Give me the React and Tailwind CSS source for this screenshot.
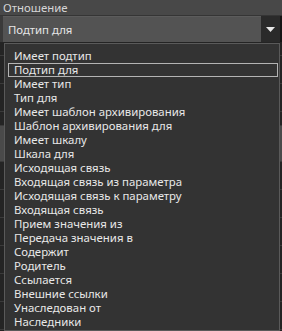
export default function App() {
  const items = [
    "Имеет подтип",
    "Подтип для",
    "Имеет тип",
    "Тип для",
    "Имеет шаблон архивирования",
    "Шаблон архивирования для",
    "Имеет шкалу",
    "Шкала для",
    "Исходящая связь",
    "Входящая связь из параметра",
    "Исходящая связь к параметру",
    "Входящая связь",
    "Прием значения из",
    "Передача значения в",
    "Содержит",
    "Родитель",
    "Ссылается",
    "Внешние ссылки",
    "Унаследован от",
    "Наследники",
  ];
  const bgRows = [
    "h-[14px]",
    "h-[28px]",
    "h-[28px]",
    "h-[14px]",
    "h-[36px]",
    "h-[28px]",
    "h-[28px]",
    "h-[28px]",
    "h-[28px]",
    "h-[28px]",
    "h-[28px]",
  ];
  return (
    <div
      className="relative w-[282px] h-[331px] overflow-hidden bg-[#232323] text-[11.4px]"
      style={{ fontFamily: '"Noto Sans", "Open Sans", sans-serif' }}
    >
      <div className="h-[15px] bg-[#484848] pl-[3px] leading-[15px] text-[#d6d6d6]">
        Отношение
      </div>
      <div className="h-px bg-[#353535]" />
      <div className="flex h-[26px] bg-[#3a3a3a]">
        <div className="ml-[3px] flex flex-1 items-center border-t border-[#5c5c5c] bg-[#535353] pl-[5px] text-[#e6e6e6]">
          Подтип для
        </div>
        <div className="flex w-[19px] items-center justify-center bg-[#2a2a2a]">
          <svg width="9" height="5" viewBox="0 0 9 5">
            <polygon points="0,0 9,0 4.5,5" fill="#e8e8e8" />
          </svg>
        </div>
        <div className="w-[2px] bg-[#151515]" />
      </div>
      <div className="flex flex-col">
        {bgRows.map((h, i) => (
          <div
            key={i}
            className={`${h} border-b border-[#3a3a3a] ${i === 4 ? "bg-[#4a4a4a]" : "bg-[#242424]"}`}
          />
        ))}
      </div>

      <div className="absolute left-[4px] top-[43px] bottom-0 w-[276px] border border-[#5a5a5a] bg-[#333333] pt-[5px] text-[#e8e8e8]">
        {items.map((t, i) => (
          <div
            key={i}
            className={`ml-[3px] mr-[1px] h-[14px] border pl-[5px] leading-[12px] whitespace-nowrap ${
              i === 1 ? "border-[#b4b4b4]" : "border-transparent"
            }`}
          >
            {t}
          </div>
        ))}
      </div>
    </div>
  );
}
